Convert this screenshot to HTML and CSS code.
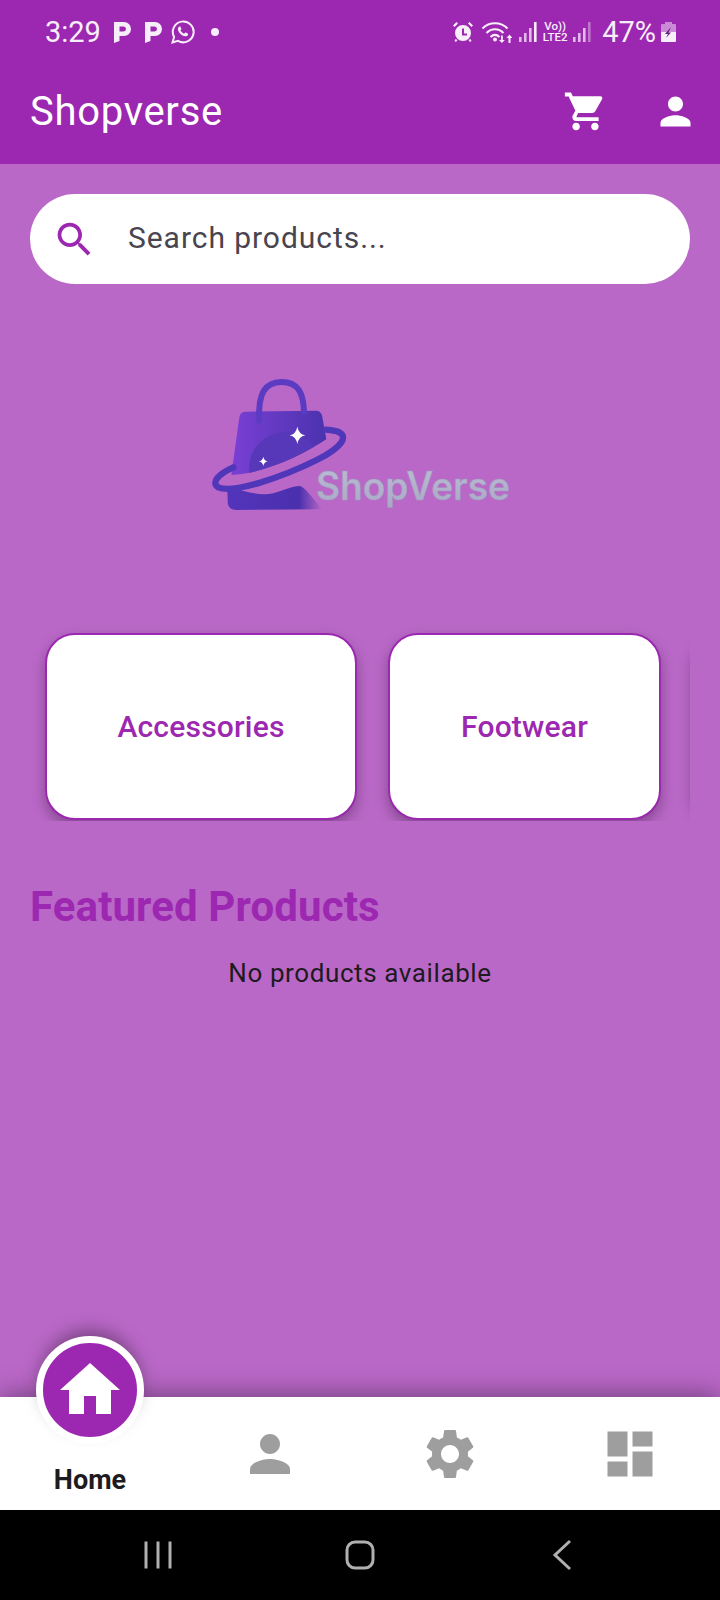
FILE: index.html
```html
<!DOCTYPE html>
<html lang="en">
<head>
<meta charset="utf-8">
<title>Shopverse</title>
<link rel="stylesheet" href="styles.css">
</head>
<body>
<div class="page">
  <header class="appbar">
    <div class="status">
      <div class="status-left">
        <span class="time">3:29</span>
        <svg class="ic-p first" viewBox="0 0 17 21"><path fill-rule="evenodd" d="M0 0h10a7 7 0 0 1 0 14H5.500v5L0 21zM5.500 4.500v5H9.500a2.500 2.500 0 0 0 0-5z"/></svg>
        <svg class="ic-p" viewBox="0 0 17 21"><path fill-rule="evenodd" d="M0 0h10a7 7 0 0 1 0 14H5.500v5L0 21zM5.500 4.500v5H9.500a2.500 2.500 0 0 0 0-5z"/></svg>
        <svg class="ic-wa" viewBox="0 0 24 24"><path class="line" d="M1.500 22.500l1.600-5.600A10.400 10.400 0 1 1 7 20.900z"/><path d="M8.300 6.600c.4-.3 1-.3 1.200.2l.8 1.900c.1.300 0 .6-.2.8l-.7.8c.7 1.500 2 2.700 3.700 3.500l.9-1c.2-.2.5-.3.8-.2l1.900.9c.4.2.5.6.4 1-.3 1.300-1.500 2-2.800 1.800-3.700-.6-7-3.800-7.400-7.100-.1-1 .7-2 1.400-2.600z"/></svg>
        <span class="dot"></span>
      </div>
      <div class="status-right">
        <svg class="ic-alarm" viewBox="0 0 20 20"><path d="M10 3a8 8 0 1 0 0 16 8 8 0 0 0 0-16zm4 10.500H9V6.500h2v5h3z" fill-rule="evenodd"/><path d="M0 3.500L3.500 0l1.500 1.500L1.500 5zM20 3.500L16.500 0 15 1.500 18.500 5zM2.500 17l2 1-1.500 2-1.500-1zM17.500 17l-2 1 1.500 2 1.500-1z"/></svg>
        <svg class="ic-wifi" viewBox="0 0 30 22"><path class="line2" d="M.5 7.500C7 .5 19 .5 25.500 7.500M4.500 12c5-5 12-5 17 0M8.500 16c3-2.800 6-2.800 9 0"/><circle cx="13" cy="18.500" r="2"/><path d="M19 14.500h1.800v4.500h2l-2.900 3-2.900-3h2zM26.500 22v-5h-2l3-3.500 3 3.500h-2v5z"/></svg>
        <svg class="ic-sig first" viewBox="0 0 18 20"><g opacity=".75"><path d="M0 15h2.600v5H0zM5 11h2.600v9H5zM10 6h2.600v14H10z"/></g><path d="M15 0h2.600v20H15z"/></svg>
        <span class="volte"><span>Vo))</span><span>LTE2</span></span>
        <svg class="ic-sig" viewBox="0 0 18 20"><g opacity=".75"><path d="M0 15h2.600v5H0zM5 11h2.600v9H5zM10 6h2.600v14H10z"/></g><path opacity=".4" d="M15 0h2.600v20H15z"/></svg>
        <span class="pct">47%</span>
        <svg class="ic-batt" viewBox="0 0 15 20"><path opacity=".5" d="M4 0h7v2h3a1 1 0 0 1 1 1v8H0V3a1 1 0 0 1 1-1h3z"/><path d="M0 10h15v9a1 1 0 0 1-1 1H1a1 1 0 0 1-1-1z"/><path fill="#6a2080" d="M10 5L4 12h3l-2 4 5-5.500H7.500z"/></svg>
      </div>
    </div>
    <div class="toolbar">
      <h1 class="title">Shopverse</h1>
      <div class="actions">
        <svg class="bar-ic" viewBox="0 0 24 24"><path d="M7 18c-1.100 0-1.990.9-1.990 2S5.900 22 7 22s2-.9 2-2-.9-2-2-2zM1 2v2h2l3.600 7.590-1.350 2.450c-.16.280-.25.610-.25.960 0 1.100.9 2 2 2h12v-2H7.420c-.14 0-.25-.11-.25-.25l.03-.12.9-1.830h7.450c.75 0 1.410-.41 1.750-1.030l3.580-6.490c.08-.14.120-.31.120-.48 0-.55-.45-1-1-1H5.210l-.94-2H1zm16 16c-1.100 0-1.990.9-1.990 2s.89 2 1.990 2 2-.9 2-2-.9-2-2-2z"/></svg>
        <svg class="bar-ic" viewBox="0 0 24 24"><path d="M12 12c2.210 0 4-1.790 4-4s-1.790-4-4-4-4 1.790-4 4 1.790 4 4 4zm0 2c-2.670 0-8 1.340-8 4v2h16v-2c0-2.660-5.330-4-8-4z"/></svg>
      </div>
    </div>
  </header>

  <main class="content">
    <div class="search">
      <svg class="search-ic" viewBox="0 0 24 24"><path d="M15.500 14h-.79l-.28-.27C15.410 12.590 16 11.110 16 9.500 16 5.910 13.090 3 9.500 3S3 5.910 3 9.500 5.910 16 9.500 16c1.610 0 3.090-.59 4.230-1.570l.27.28v.79l5 4.990L20.490 19l-4.990-5zm-6 0C7.010 14 5 11.990 5 9.500S7.010 5 9.500 5 14 7.010 14 9.500 11.990 14 9.500 14z"/></svg>
      <span class="search-text">Search products...</span>
    </div>

    <div class="logo">
      <svg class="logo-svg" viewBox="0 0 1020 510" role="img" aria-label="ShopVerse logo">
        <defs>
          <linearGradient id="bagG" x1="0" x2="1" y1="0" y2="0"><stop offset="0" stop-color="#7a3fd4"/><stop offset="1" stop-color="#4a33ae"/></linearGradient>
          <linearGradient id="lowG" x1="0" x2="1" y1="0" y2="0"><stop offset="0" stop-color="#5334bb"/><stop offset=".75" stop-color="#4a30ad"/><stop offset="1" stop-color="#4a30ad" stop-opacity="0"/></linearGradient>
          <linearGradient id="txtG" x1="0" x2="0" y1="0" y2="1"><stop offset="0" stop-color="#bdbdd6"/><stop offset="1" stop-color="#a9a9c6"/></linearGradient>
          <clipPath id="bagC"><path d="M165 155L378 152Q392 152 396 166L409 238C330 290 220 340 124 345L148 172Q150 156 165 155Z"/></clipPath>
        </defs>
        <path d="M112 385Q112 380 125 382C165 396 210 408 250 400C285 390 305 378 330 378C350 385 375 425 398 448L140 450Q115 450 113 428Z" fill="url(#lowG)"/>
        <path d="M165 155L378 152Q392 152 396 166L409 238C330 290 220 340 124 345L148 172Q150 156 165 155Z" fill="url(#bagG)"/>
        <g clip-path="url(#bagC)"><circle cx="285" cy="325" r="108" fill="#5638b8"/></g>
        <path d="M208 182C203 100 225 66 275 66C325 66 340 100 342 155" fill="none" stroke="#5a3bc2" stroke-width="18" stroke-linecap="round"/>
        <path d="M130 322C85 342 62 368 85 382C130 402 280 350 380 300C460 260 478 226 440 214C430 211 420 210 408 209" fill="none" stroke="#5036b8" stroke-width="19" stroke-linecap="round"/>
        <path d="M322 200Q326 222 346 226Q326 230 322 252Q318 230 299 226Q318 222 322 200Z" fill="#fff"/>
        <path d="M220 290Q222 302 234 304Q222 306 220 318Q218 306 206 304Q218 302 220 290Z" fill="#fff"/>
        <text class="logo-text" x="378" y="420" textLength="582" lengthAdjust="spacingAndGlyphs" fill="url(#txtG)">ShopVerse</text>
      </svg>
    </div>

    <div class="cats">
      <div class="cat cat-a">Accessories</div>
      <div class="cat cat-b">Footwear</div>
      <div class="cat cat-c"></div>
    </div>

    <h2 class="featured">Featured Products</h2>
    <p class="empty">No products available</p>
  </main>

  <nav class="nav">
    <div class="fab">
      <svg class="fab-ic" viewBox="0 0 24 24"><path d="M10 20v-6h4v6h5v-8h3L12 3 2 12h3v8z"/></svg>
    </div>
    <div class="nav-item home"><span class="nav-label">Home</span></div>
    <div class="nav-item"><svg class="nav-ic" viewBox="0 0 24 24"><path d="M12 12c2.210 0 4-1.790 4-4s-1.790-4-4-4-4 1.790-4 4 1.790 4 4 4zm0 2c-2.670 0-8 1.340-8 4v2h16v-2c0-2.660-5.330-4-8-4z"/></svg></div>
    <div class="nav-item"><svg class="nav-ic" viewBox="0 0 24 24"><path d="M19.140 12.940c.04-.3.060-.61.060-.94 0-.32-.02-.64-.07-.94l2.030-1.580c.18-.14.230-.41.120-.61l-1.920-3.320c-.12-.22-.37-.29-.59-.22l-2.390.96c-.5-.38-1.030-.7-1.620-.94l-.36-2.540c-.04-.24-.24-.41-.48-.41h-3.840c-.24 0-.43.170-.47.410l-.36 2.540c-.59.240-1.130.570-1.620.94l-2.390-.96c-.22-.08-.47 0-.59.220L2.740 8.870c-.12.210-.08.470.12.610l2.030 1.580c-.05.300-.09.630-.09.940s.02.640.07.940l-2.030 1.580c-.18.140-.23.410-.12.610l1.920 3.320c.12.220.37.290.59.220l2.390-.96c.5.380 1.030.7 1.620.94l.36 2.540c.05.240.24.410.48.410h3.840c.24 0 .44-.17.470-.41l.36-2.540c.59-.24 1.130-.56 1.620-.94l2.390.96c.22.080.47 0 .59-.22l1.920-3.320c.12-.22.070-.47-.12-.61l-2.010-1.580zM12 15.600c-1.980 0-3.600-1.620-3.600-3.600s1.620-3.600 3.600-3.600 3.600 1.620 3.600 3.600-1.620 3.600-3.600 3.600z"/></svg></div>
    <div class="nav-item"><svg class="nav-ic" viewBox="0 0 24 24"><path d="M3 13h8V3H3v10zm0 8h8v-6H3v6zm10 0h8V11h-8v10zm0-18v6h8V3h-8z"/></svg></div>
  </nav>

  <footer class="sys">
    <svg class="sys-ic" viewBox="0 0 32 32"><path d="M4 2.500v27M16 2.500v27M28 2.500v27"/></svg>
    <svg class="sys-ic" viewBox="0 0 32 32"><rect x="3" y="3" width="26" height="26" rx="8"/></svg>
    <svg class="sys-ic" viewBox="0 0 32 32"><path d="M24 2L9 16l15 14"/></svg>
  </footer>
</div>
</body>
</html>
```

FILE: styles.css
```css
* { box-sizing: border-box; }
html, body { margin: 0; padding: 0; }
body { font-family: Roboto, "Liberation Sans", sans-serif; }
.page {
  width: 720px;
  height: 1600px;
  display: flex;
  flex-direction: column;
  background: #ba68c8;
  overflow: hidden;
}

/* app bar */
.appbar { background: #9c27b0; color: #fff; height: 164px; flex: none; }
.status {
  height: 64px;
  padding: 0 44px 0 45px;
  display: flex;
  justify-content: space-between;
  align-items: center;
  color: #f8eefa;
  fill: #f8eefa;
}
.status-left, .status-right { display: flex; align-items: center; }
.time, .pct { font-size: 29px; line-height: 32px; }
.ic-p { width: 17px; height: 21px; margin-left: 14px; }
.ic-p.first { margin-left: 13px; }
.ic-wa { width: 24px; height: 24px; margin-left: 9px; }
.line { fill: none; stroke: #f8eefa; stroke-width: 2; }
.dot { width: 8px; height: 8px; border-radius: 50%; background: #f8eefa; margin-left: 16px; }
.ic-alarm { width: 20px; height: 20px; }
.ic-wifi { width: 30px; height: 22px; margin-left: 9px; }
.line2 { fill: none; stroke: #f8eefa; stroke-width: 2.2; }
.ic-sig { width: 18px; height: 20px; margin-left: 5px; }
.ic-sig.first { margin-left: 7px; }
.volte {
  display: flex;
  flex-direction: column;
  align-items: center;
  font-size: 11.5px;
  line-height: 11px;
  font-weight: 500;
  width: 26px;
  margin-left: 5px;
}
.pct { margin-left: 11px; }
.ic-batt { width: 15px; height: 20px; margin-left: 5px; }

.toolbar {
  height: 100px;
  padding: 0 22px 5px 30px;
  display: flex;
  justify-content: space-between;
  align-items: center;
}
.title { margin: 0; font-size: 40px; letter-spacing: .7px; font-weight: 400; line-height: 48px; }
.actions { display: flex; gap: 45px; }
.bar-ic { width: 45px; height: 45px; fill: #fff; }

/* content */
.content { flex: 1; display: flex; flex-direction: column; min-height: 0; }
.search {
  margin: 30px 30px 0;
  height: 90px;
  border-radius: 45px;
  background: #fff;
  display: flex;
  align-items: center;
  padding-left: 22px;
}
.search-ic { width: 45px; height: 45px; flex: none; fill: #9c27b0; margin-top: 1px; }
.search-text { margin: 0 0 4px 31px; font-size: 30px; letter-spacing: .95px; color: #49454f; }

.logo { margin: 76px 0 0 190px; height: 170px; width: 340px; }
.logo-svg { display: block; width: 340px; height: 170px; }
.logo-text { font-family: Inter, sans-serif; font-size: 117px; font-weight: 600; stroke: #9c9cba; stroke-width: 1.5px; }

.cats {
  margin: 95px 30px 0;
  padding: 8px 0 1px 15px;
  display: flex;
  gap: 31px;
  overflow: hidden;
}
.cat {
  flex: none;
  height: 186.5px;
  border: 2px solid #9c27b0;
  border-radius: 30px;
  background: #fff;
  box-shadow: 0 6px 14px rgba(0, 0, 0, .3);
  color: #9c27b0;
  font-size: 30px;
  letter-spacing: .2px;
  font-weight: 500;
  display: flex;
  align-items: center;
  justify-content: center;
}
.cat-a { width: 312px; }
.cat-b { width: 273px; }
.cat-c { width: 272px; }

.featured {
  margin: 61px 0 0 30px;
  font-size: 42px;
  letter-spacing: .12px;
  line-height: 50px;
  font-weight: 700;
  color: #9c27b0;
}
.empty {
  margin: 26px 0 0;
  text-align: center;
  font-size: 26px;
  line-height: 30px;
  letter-spacing: .6px;
  color: #1d1b20;
}

/* bottom nav */
.nav {
  position: relative;
  flex: none;
  height: 113px;
  background: #fff;
  display: grid;
  grid-template-columns: repeat(4, 180px);
  box-shadow: 0 -4px 24px rgba(0, 0, 0, .35);
}
.nav-item { display: flex; justify-content: center; padding-top: 27px; }
.nav-ic { width: 60px; height: 60px; fill: #9e9e9e; }
.nav-item.home { padding-top: 66px; }
.nav-label { font-size: 27px; line-height: 34px; font-weight: 700; color: #1d1b20; }
.fab {
  position: absolute;
  left: 36px;
  top: -61px;
  width: 108px;
  height: 108px;
  border-radius: 50%;
  background: #9c27b0;
  border: 7px solid #fff;
  box-shadow: 0 -10px 18px -4px rgba(0, 0, 0, .35);
  display: flex;
  align-items: center;
  justify-content: center;
}
.fab-ic { width: 72px; height: 72px; fill: #fff; flex: none; }

/* system bar */
.sys {
  flex: none;
  height: 90px;
  background: #000;
  display: flex;
  justify-content: center;
  align-items: center;
  gap: 170px;
}
.sys-ic { width: 32px; height: 32px; fill: none; stroke: #b0b0b0; stroke-width: 3; }
```
